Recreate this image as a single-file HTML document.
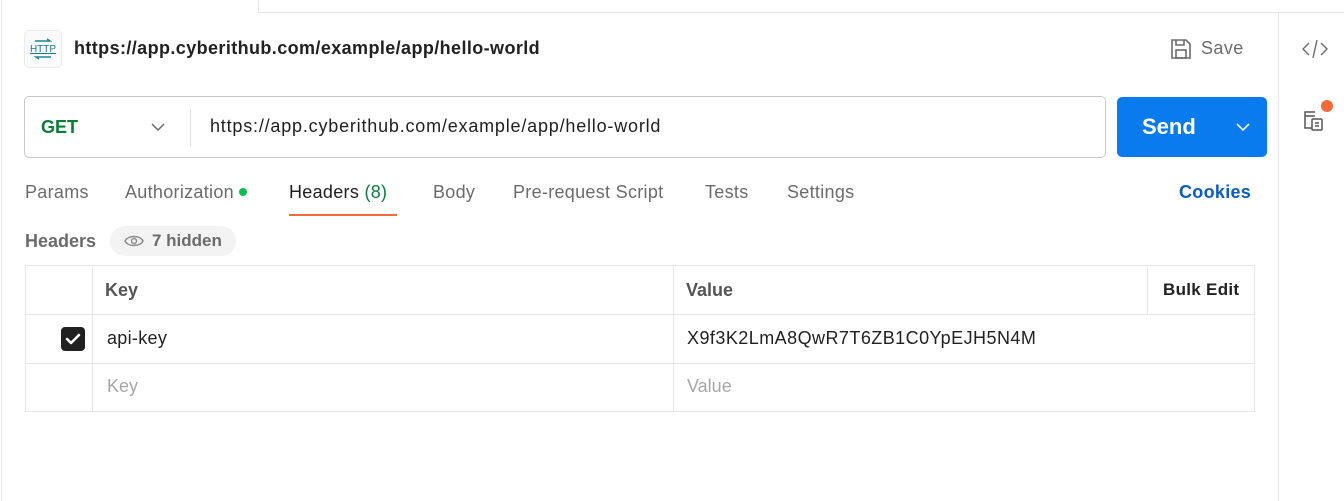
<!DOCTYPE html>
<html><head><meta charset="utf-8"><style>
*{margin:0;padding:0;box-sizing:border-box}
body{width:1344px;height:501px;background:#fff;font-family:"Liberation Sans",sans-serif;position:relative;overflow:hidden;color:#212121}
.a{position:absolute;white-space:nowrap}
.tab{position:absolute;top:182px;font-size:18px;color:#6b6b6b;letter-spacing:0.3px}
</style></head><body>
<div class="a" style="left:1px;top:0;width:1px;height:501px;background:#ececec"></div>
<div class="a" style="left:258px;top:0;width:1px;height:13px;background:#e6e6e6"></div>
<div class="a" style="left:258px;top:12px;width:1086px;height:1px;background:#e6e6e6"></div>
<div class="a" style="left:1278px;top:13px;width:1px;height:488px;background:#e6e6e6"></div>

<div class="a" style="left:24px;top:30px;width:38px;height:38px;border:1px solid #ececec;border-radius:5px;background:#fafafa">
<svg width="36" height="36" viewBox="0 0 36 36"><path d="M10 10h15l-3-2" stroke="#1a8a9a" stroke-width="1.5" fill="none"/><text x="18" y="21" font-size="10" text-anchor="middle" fill="#1a7a8a" font-family="Liberation Sans Narrow,Liberation Sans" text-decoration="underline">HTTP</text><path d="M26 26H11l3 2" stroke="#1a8a9a" stroke-width="1.5" fill="none"/></svg></div>
<div class="a" style="left:74px;top:38px;font-size:18px;font-weight:bold;color:#212121;letter-spacing:0.4px">https://app.cyberithub.com/example/app/hello-world</div>

<svg class="a" style="left:1169px;top:37px" width="24" height="24" viewBox="0 0 24 24" fill="none" stroke="#6b6b6b" stroke-width="1.6"><path d="M3 3h14l4 4v14H3z"/><path d="M7 3v5h8V3"/><rect x="7" y="13" width="10" height="8"/></svg>
<div class="a" style="left:1201px;top:38px;font-size:18px;color:#6b6b6b;letter-spacing:0.4px">Save</div>

<div class="a" style="left:24px;top:96px;width:1082px;height:62px;border:1px solid #c9c9c9;border-radius:5px"></div>
<div class="a" style="left:41px;top:117px;font-size:18px;font-weight:bold;color:#0b7c3a">GET</div>
<svg class="a" style="left:150px;top:120px" width="16" height="14"><path d="M2 4l6 6 6-6" stroke="#6b6b6b" stroke-width="1.5" fill="none"/></svg>
<div class="a" style="left:190px;top:109px;width:1px;height:37px;background:#e0e0e0"></div>
<div class="a" style="left:210px;top:116px;font-size:18px;color:#212121;letter-spacing:0.8px">https://app.cyberithub.com/example/app/hello-world</div>

<div class="a" style="left:1117px;top:97px;width:150px;height:60px;background:#097bed;border-radius:5px"></div>
<div class="a" style="left:1142px;top:114px;font-size:22px;font-weight:bold;color:#fff">Send</div>
<svg class="a" style="left:1235px;top:120px" width="16" height="14"><path d="M2 4l6 6 6-6" stroke="#fff" stroke-width="1.6" fill="none"/></svg>

<svg class="a" style="left:1301px;top:38px" width="28" height="22" viewBox="0 0 28 22" fill="none" stroke="#6b6b6b" stroke-width="1.4"><path d="M8 5l-6 6 6 6M20 5l6 6-6 6M16 2l-4 18"/></svg>
<svg class="a" style="left:1302px;top:108px" width="26" height="26" viewBox="0 0 26 26" fill="none" stroke="#555" stroke-width="1.5"><path d="M13 4H3v16h7"/><path d="M3 8h10"/><rect x="10" y="11" width="10" height="11" rx="1"/><path d="M13 15h4M13 18h4"/></svg>
<div class="a" style="left:1321px;top:100px;width:12px;height:12px;border-radius:50%;background:#f26b3a"></div>

<div class="tab" style="left:25px">Params</div>
<div class="tab" style="left:125px">Authorization <span style="display:inline-block;width:8px;height:8px;border-radius:50%;background:#0cbb52;vertical-align:2px"></span></div>
<div class="tab" style="left:289px;color:#212121">Headers <span style="color:#0b7c3a">(8)</span></div>
<div class="a" style="left:289px;top:214px;width:108px;height:2px;background:#f26b3a"></div>
<div class="tab" style="left:433px">Body</div>
<div class="tab" style="left:513px">Pre-request Script</div>
<div class="tab" style="left:705px">Tests</div>
<div class="tab" style="left:787px">Settings</div>
<div class="tab" style="left:1179px;color:#0b5cc1;font-weight:bold">Cookies</div>

<div class="a" style="left:25px;top:231px;font-size:18px;font-weight:bold;color:#6b6b6b">Headers</div>
<div class="a" style="left:110px;top:226px;width:126px;height:30px;border-radius:15px;background:#f3f3f3"></div>
<svg class="a" style="left:124px;top:234px" width="20" height="14" viewBox="0 0 20 14" fill="none" stroke="#8a8a8a" stroke-width="1.5"><path d="M1 7c3-6 15-6 18 0c-3 6-15 6-18 0z"/><circle cx="10" cy="7" r="2.5"/></svg>
<div class="a" style="left:152px;top:231px;font-size:17px;font-weight:bold;color:#6b6b6b">7 hidden</div>

<div class="a" style="left:25px;top:265px;width:1230px;height:147px;border:1px solid #e6e6e6"></div>
<div class="a" style="left:26px;top:314px;width:1228px;height:1px;background:#e6e6e6"></div>
<div class="a" style="left:26px;top:363px;width:1228px;height:1px;background:#e6e6e6"></div>
<div class="a" style="left:92px;top:266px;width:1px;height:145px;background:#e6e6e6"></div>
<div class="a" style="left:673px;top:266px;width:1px;height:145px;background:#e6e6e6"></div>
<div class="a" style="left:1147px;top:266px;width:1px;height:48px;background:#e6e6e6"></div>
<div class="a" style="left:105px;top:280px;font-size:18px;font-weight:bold;color:#555">Key</div>
<div class="a" style="left:686px;top:280px;font-size:18px;font-weight:bold;color:#555">Value</div>
<div class="a" style="left:1163px;top:280px;font-size:17px;font-weight:bold;color:#212121;letter-spacing:0.3px">Bulk Edit</div>
<div class="a" style="left:61px;top:327px;width:24px;height:24px;border-radius:4px;background:#212121"></div>
<svg class="a" style="left:61px;top:327px" width="24" height="24"><path d="M6 12l4 4 8-8" stroke="#fff" stroke-width="2.6" fill="none" stroke-linecap="round" stroke-linejoin="round"/></svg>
<div class="a" style="left:107px;top:328px;font-size:18px;color:#212121;letter-spacing:0.3px">api-key</div>
<div class="a" style="left:687px;top:328px;font-size:18px;color:#212121;letter-spacing:0.45px">X9f3K2LmA8QwR7T6ZB1C0YpEJH5N4M</div>
<div class="a" style="left:107px;top:376px;font-size:18px;color:#a6a6a6">Key</div>
<div class="a" style="left:687px;top:376px;font-size:18px;color:#a6a6a6">Value</div>
</body></html>
